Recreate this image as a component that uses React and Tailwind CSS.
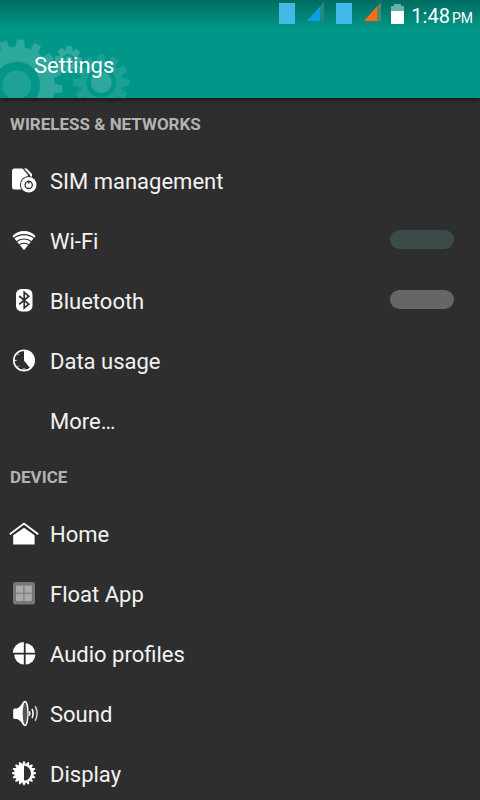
import { useState } from 'react';

const TEAL = '#009688';

// ── Header gears ─────────────────────────────────────────
function Gear({ cx, cy, body, outer, teeth, toothWidth, offset, ring, hub, fill, hubFill }) {
  return (
    <g transform={`translate(${cx} ${cy})`}>
      <g fill={fill}>
        {Array.from({ length: teeth }, (_, i) => (
          <path
            key={i}
            transform={`rotate(${offset + (360 / teeth) * i})`}
            d={`M${-toothWidth / 2 - 0.8} ${-body + 1} L${-toothWidth / 2} ${-outer} H${toothWidth / 2} L${toothWidth / 2 + 0.8} ${-body + 1} Z`}
          />
        ))}
        <circle r={body} />
      </g>
      <circle r={ring} fill={TEAL} />
      <circle r={hub} fill={hubFill} />
    </g>
  );
}

function GearArt() {
  return (
    <svg className="absolute bottom-0 left-0" width="140" height="60" viewBox="0 38 140 60" aria-hidden="true">
      <Gear cx={68.5} cy={59.5} body={9.5} outer={13.5} teeth={8} toothWidth={5.5} offset={3} ring={5.5} hub={4} fill="#31aa9f" hubFill="#26a599" />
      <Gear cx={101.3} cy={82.5} body={21} outer={28} teeth={12} toothWidth={7} offset={0} ring={15} hub={10.5} fill="#1ba094" hubFill="#2ea89c" />
      <Gear cx={16.7} cy={85} body={38.5} outer={45.5} teeth={16} toothWidth={7.5} offset={5} ring={23.3} hub={14.5} fill="#2ea89c" hubFill="#1fa296" />
    </svg>
  );
}

// ── Status bar ───────────────────────────────────────────
function SimBadge() {
  return (
    <svg className="mt-px" width="16" height="21" viewBox="0 0 16 21" aria-hidden="true">
      <rect width="16" height="21" fill="#43b9e8" />
    </svg>
  );
}

function Signal({ color, rest }) {
  return (
    <svg width="17" height="19" viewBox="0 0 17 19" aria-hidden="true">
      <path d="M0 19 L17 0 V19 Z" fill={rest} />
      <path d="M0 19 L13 4.5 V19 Z" fill={color} />
    </svg>
  );
}

function StatusBar() {
  return (
    <div className="flex h-7 items-start justify-end pr-[7px]">
      <div className="flex items-start gap-3 pt-0.5">
        <SimBadge />
        <Signal color="#0d9ee6" rest="#1f8a86" />
        <SimBadge />
        <Signal color="#ff6d10" rest="#4f8a6c" />
      </div>
      <svg className="mt-1 ml-2.5" width="13" height="20" viewBox="0 0 13 20" aria-hidden="true">
        <path d="M3 0 H10 V2 H13 V8 H0 V2 H3 Z" fill="#68b2aa" />
        <rect y="7" width="13" height="13" fill="#fff" />
      </svg>
      <div className="ml-[7px] flex items-baseline gap-0.5 pt-1 text-white">
        <span className="text-[20px] leading-6">1:48</span>
        <span className="text-[14px] leading-6">PM</span>
      </div>
    </div>
  );
}

// ── Row icons ────────────────────────────────────────────
function Icon({ children }) {
  return (
    <svg className="shrink-0" width="32" height="32" viewBox="0 0 32 32" fill="#fff" aria-hidden="true">
      {children}
    </svg>
  );
}

const BG = '#2e2e2e';

const icons = {
  sim: (
    <Icon>
      <path d="M6.5 3.5 H14.5 L20 10 V24.5 H6.5 Q4 24.5 4 22 V6 Q4 3.5 6.5 3.5 Z" />
      <path d="M16 3.5 H18.6 L24 9 V13 H22 V10 Z" />
      <circle cx="20.7" cy="19.7" r="8.8" fill={BG} />
      <circle cx="20.7" cy="19.7" r="7.8" />
      <circle cx="20.7" cy="19.9" r="3.6" fill="none" stroke={BG} strokeWidth="1.3" />
      <path d="M20.7 15.6 V18.4" stroke={BG} strokeWidth="1.6" />
    </Icon>
  ),
  wifi: (
    <Icon>
      <path d="M16 25.2 L4.4 11 Q9.5 6 16 6 T27.6 11 Z" />
      <g fill="none" stroke={BG} strokeWidth="1.1">
        <path d="M5.5 13.5 Q10 9.6 16 9.6 T26.5 13.5" />
        <path d="M8 17 Q11.5 14 16 14 T24 17" />
        <path d="M10.5 20.3 Q13 18.2 16 18.2 T21.5 20.3" />
      </g>
    </Icon>
  ),
  bluetooth: (
    <Icon>
      <rect x="8" y="4" width="16.5" height="22.4" rx="5.5" />
      <path d="M11.2 11 L20.8 19.2 L16.2 23 V7.4 L20.8 11.2 L11.2 19.4" fill="none" stroke={BG} strokeWidth="1.7" />
    </Icon>
  ),
  data: (
    <Icon>
      <circle cx="16" cy="15.4" r="10.2" fill="none" stroke="#fff" strokeWidth="1.6" />
      <path d="M16 15.4 V5 A10.4 10.4 0 0 1 22.4 23.6 Z" />
      <path d="M6 15.4 h2.6 M16 25.5 v-2.6 M8.8 8.2 l1.8 1.8 M8.8 22.6 l1.8 -1.8" stroke="#fff" strokeWidth="1" />
    </Icon>
  ),
  home: (
    <Icon>
      <path d="M1.8 16.3 L16 5.6 L30.2 16.3" fill="none" stroke="#fff" strokeWidth="1.8" />
      <path d="M5.2 26.5 V17.2 L16 9.7 L26.6 17.2 V26.5 Z" />
    </Icon>
  ),
  float: (
    <Icon>
      <rect x="5" y="4" width="22" height="22.4" rx="2.5" fill="#777" />
      <path d="M8 7.4 h7.4 v7.3 h-7.4 Z M16.5 7.4 h7.4 v7.3 h-7.4 Z M8 15.8 h7.4 v7.3 h-7.4 Z M16.5 15.8 h7.4 v7.3 h-7.4 Z" fill="#aaa" />
    </Icon>
  ),
  audio: (
    <Icon>
      <path d="M15.8 14.7 H4.7 A11.2 11.2 0 0 1 15.8 4 Z" />
      <path d="M17.6 14.7 V5.2 A10.2 10.2 0 0 1 27.2 14.7 Z" />
      <path d="M15.8 16.6 V26.4 A10 10 0 0 1 6.2 16.6 Z" />
      <path d="M17.6 16.6 H27.4 A10 10 0 0 1 17.6 26.6 Z" />
    </Icon>
  ),
  sound: (
    <Icon>
      <path d="M5.2 12 Q5.2 10.4 6.8 10.4 H9 Q13 8.4 15.5 3 V28 Q13 22.6 9 21 H6.8 Q5.2 21 5.2 19.4 Z" />
      <ellipse cx="17" cy="15.5" rx="3" ry="12" fill="#555" stroke="#fff" strokeWidth="1.3" />
      <path d="M21.4 13.2 Q22.4 15.5 21.4 17.8" fill="none" stroke="#fff" strokeWidth="1.4" />
      <path d="M24 10.8 Q26.2 15.5 24 20.2" fill="none" stroke="#fff" strokeWidth="1.6" />
      <path d="M27.2 8.2 Q31 15.5 27.2 22.8" fill="none" stroke="#ccc" strokeWidth="1.6" />
    </Icon>
  ),
  display: (
    <Icon>
      <g transform="translate(16 15.2)">
        {Array.from({ length: 16 }, (_, i) => (
          <path key={i} transform={`rotate(${i * 22.5})`} d="M-2 -8.5 L-0.6 -12 H0.6 L2 -8.5 Z" />
        ))}
        <circle r="9.2" />
        <path d="M0 -7.4 A7 7.4 0 0 1 0 7.4 Z" fill={BG} />
      </g>
    </Icon>
  ),
};

// ── Settings list ────────────────────────────────────────
const sections = [
  {
    title: 'WIRELESS & NETWORKS',
    rows: [
      { label: 'SIM management', icon: 'sim' },
      { label: 'Wi-Fi', icon: 'wifi', toggle: true, on: true },
      { label: 'Bluetooth', icon: 'bluetooth', toggle: true, on: false },
      { label: 'Data usage', icon: 'data' },
      { label: 'More…' },
    ],
  },
  {
    title: 'DEVICE',
    rows: [
      { label: 'Home', icon: 'home' },
      { label: 'Float App', icon: 'float' },
      { label: 'Audio profiles', icon: 'audio' },
      { label: 'Sound', icon: 'sound' },
      { label: 'Display', icon: 'display' },
    ],
  },
];

function RowContent({ row }) {
  return (
    <>
      {row.icon ? icons[row.icon] : <span className="w-8 shrink-0" />}
      <span className="flex-1">{row.label}</span>
    </>
  );
}

function ToggleRow({ row }) {
  const [on, setOn] = useState(row.on);

  return (
    <label className="flex h-[60px] w-full cursor-pointer items-center gap-2.5 pr-[26px] pl-2">
      <RowContent row={row} />
      <input
        type="checkbox"
        role="switch"
        checked={on}
        onChange={(e) => setOn(e.target.checked)}
        className="mb-[3px] h-[19px] w-16 appearance-none rounded-full bg-[#666] checked:bg-[#3a4b4a]"
      />
    </label>
  );
}

function Row({ row }) {
  if (row.toggle) return <ToggleRow row={row} />;

  return (
    <button type="button" className="flex h-[60px] w-full items-center gap-2.5 pr-[26px] pl-2 text-left">
      <RowContent row={row} />
    </button>
  );
}

export default function App() {
  return (
    <div className="flex h-screen flex-col bg-[#2e2e2e] font-[Roboto,sans-serif]">
      <header className="relative z-10 shrink-0 bg-[#009688] bg-linear-to-b from-[#006c61] to-[#009688] to-[28px] shadow-[0_1px_5px_rgba(0,0,0,0.7)]">
        <GearArt />
        <div className="relative">
          <StatusBar />
          <h1 className="px-[34px] pt-6 pb-[18px] text-[22px] leading-7 text-white">Settings</h1>
        </div>
      </header>

      <main className="min-h-0 flex-1 overflow-y-auto [scrollbar-width:none]">
        {sections.map((section) => (
          <section key={section.title}>
            <h2 className="flex h-[53px] items-center px-2.5 text-[17px] font-bold text-[#b3b3b3]">{section.title}</h2>
            <ul className="text-[22px] text-[#f3f3f3]">
              {section.rows.map((row) => (
                <li key={row.label}>
                  <Row row={row} />
                </li>
              ))}
            </ul>
          </section>
        ))}
      </main>
    </div>
  );
}
